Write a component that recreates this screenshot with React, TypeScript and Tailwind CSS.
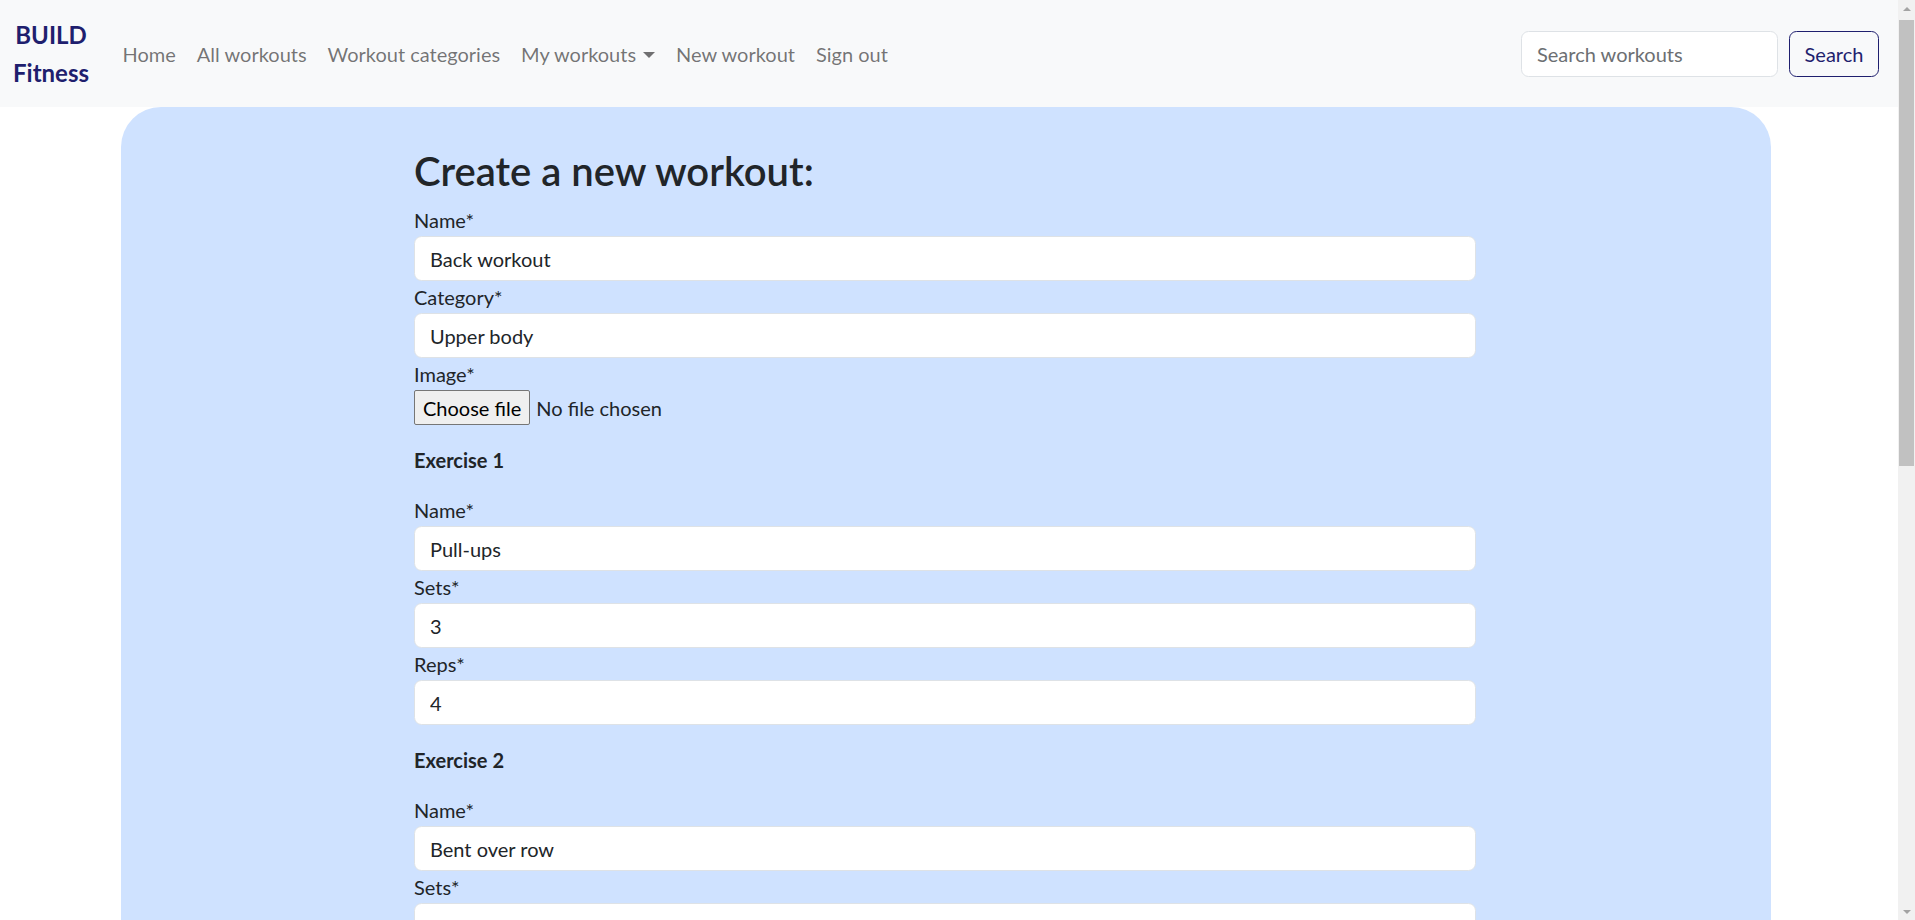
import { useState } from 'react'

type Exercise = { name: string; sets: string; reps: string }

const navLinks = ['Home', 'All workouts', 'Workout categories']

function Field({ label, value }: { label: string; value: string }) {
  return (
    <div className="mb-[1px]">
      <label className="block h-[31px] leading-[30px]">{label}</label>
      <input
        readOnly
        value={value}
        className="block h-[45px] w-full rounded-[7.5px] border border-[#dee2e6] bg-white px-[15px] text-[20px] text-[#212529] outline-none"
      />
    </div>
  )
}

// the browser's classic scrollbar, drawn because the page is photographed without one
function Scrollbar() {
  return (
    <div className="fixed right-0 top-0 flex h-screen w-[17px] flex-col items-center bg-[#f1f1f1]">
      <div className="flex h-[17px] w-full items-center justify-center">
        <span className="h-0 w-0 border-x-[4px] border-b-[4px] border-x-transparent border-b-[#a3a3a3]" />
      </div>
      <div className="mt-[3px] h-[446px] w-[15px] bg-[#c1c1c1]" />
      <div className="mt-auto flex h-[17px] w-full items-center justify-center">
        <span className="h-0 w-0 border-x-[4px] border-t-[4px] border-x-transparent border-t-[#a3a3a3]" />
      </div>
    </div>
  )
}

function App() {
  const [exercises] = useState<Exercise[]>([
    { name: 'Pull-ups', sets: '3', reps: '4' },
    { name: 'Bent over row', sets: '3', reps: '10' },
    { name: 'Lat pulldown', sets: '3', reps: '12' },
    { name: 'Seated cable row', sets: '3', reps: '12' },
  ])

  return (
    <div className="min-h-screen bg-white font-[Lato,'Liberation_Sans',sans-serif] text-[20px] leading-[30px] text-[#212529]">
      <div className="mr-[17px]">
        <nav className="flex h-[107px] items-center bg-[#f8f9fa] pl-[13px] pr-[19px]">
          <a className="mr-[23px] block text-center text-[24px] font-bold leading-[38px] text-[#1f1f6e]">
            BUILD
            <br />
            Fitness
          </a>
          <ul className="flex items-center">
            {navLinks.map((l) => (
              <li key={l}>
                <a className="block px-[10.5px] text-black/55">{l}</a>
              </li>
            ))}
            <li>
              <a className="flex items-center px-[10.5px] text-black/55">
                My workouts
                <span className="ml-[7px] mt-[2px] h-0 w-0 border-x-[6px] border-t-[6px] border-x-transparent border-t-black/55" />
              </a>
            </li>
            <li>
              <a className="block px-[10.5px] text-black/55">New workout</a>
            </li>
            <li>
              <a className="block px-[10.5px] text-black/55">Sign out</a>
            </li>
          </ul>
          <form className="ml-auto flex items-center gap-[11px]">
            <input
              placeholder="Search workouts"
              className="h-[46px] w-[257px] rounded-[7.5px] border border-[#dee2e6] bg-white px-[15px] text-[20px] outline-none placeholder:text-[#6c6f73]"
            />
            <button
              type="button"
              className="h-[46px] w-[90px] rounded-[7.5px] border border-[#1f1f6e] text-[20px] text-[#1f1f6e]"
            >
              Search
            </button>
          </form>
        </nav>

        <main className="ml-[121px] w-[1650px] rounded-t-[40px] bg-[#cfe2ff] pb-[135px] pt-[40px]">
          <div className="ml-[293px] w-[1062px]">
            <h2 className="mb-[10px] text-[40px] font-semibold leading-[48px]">Create a new workout:</h2>
            <Field label="Name*" value="Back workout" />
            <Field label="Category*" value="Upper body" />
            <div className="mb-[1px]">
              <label className="block h-[31px] leading-[30px]">Image*</label>
              <div className="flex h-[35px] items-center">
                <span className="flex h-[35px] items-center rounded-[2px] border border-[#767676] bg-[#efefef] px-[8px] text-black">
                  Choose file
                </span>
                <span className="ml-[6px]">No file chosen</span>
              </div>
            </div>

            {exercises.map((ex, i) => (
              <div key={i}>
                <p className="mb-[20px] mt-[20px] font-bold">Exercise {i + 1}</p>
                <Field label="Name*" value={ex.name} />
                <Field label="Sets*" value={ex.sets} />
                <Field label="Reps*" value={ex.reps} />
              </div>
            ))}

            <button
              type="button"
              className="mt-[20px] h-[46px] rounded-[7.5px] border border-[#1f1f6e] px-[15px] text-[#1f1f6e]"
            >
              Create workout
            </button>
          </div>
        </main>
      </div>
      <Scrollbar />
    </div>
  )
}

export default App
